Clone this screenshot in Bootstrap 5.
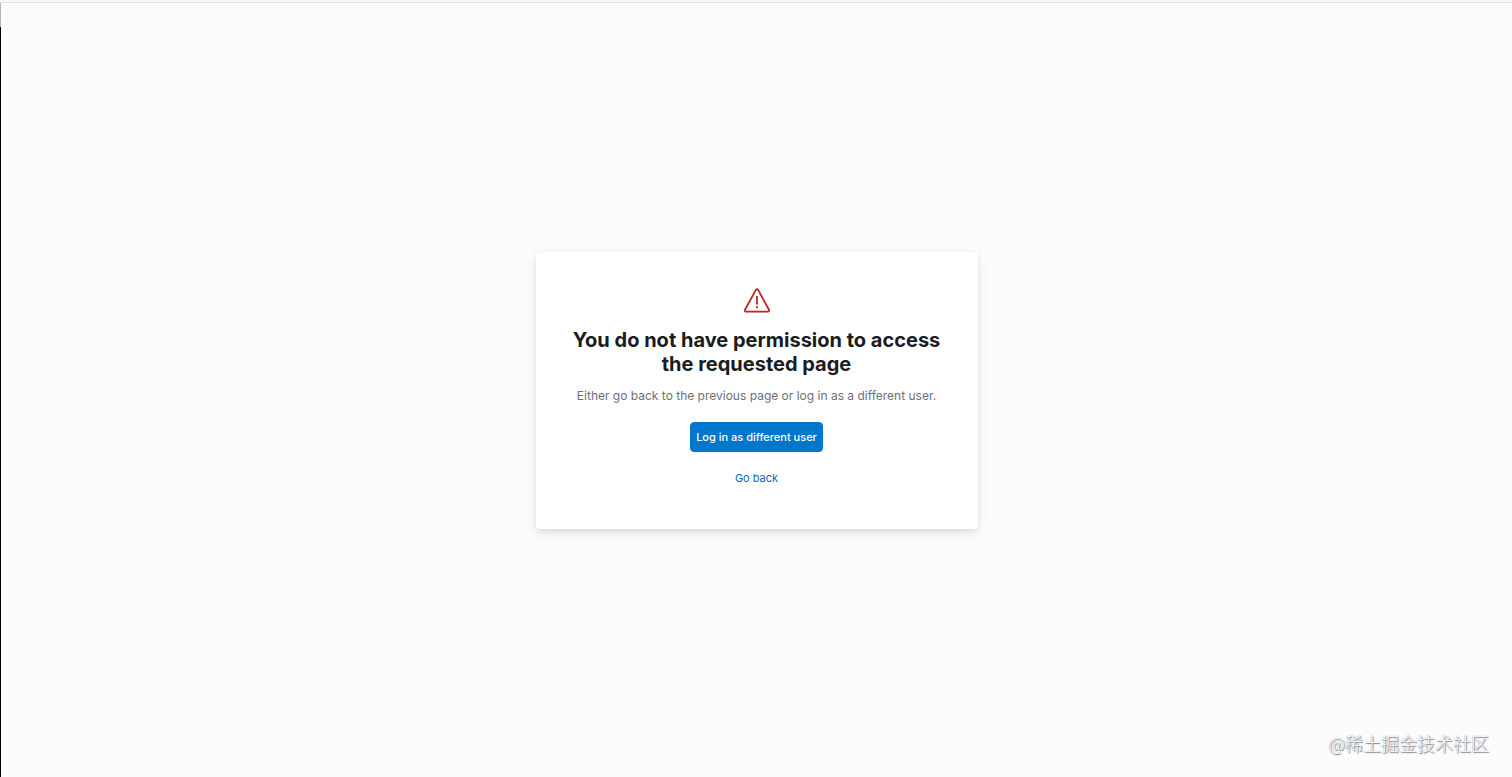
<!DOCTYPE html>
<html lang="en">
<head>
<meta charset="utf-8">
<meta name="viewport" content="width=device-width, initial-scale=1">
<title>Permission required</title>
<link href="https://cdn.jsdelivr.net/npm/bootstrap@5.3.0/dist/css/bootstrap.min.css" rel="stylesheet">
<style>
body { font-family: Inter, "Noto Sans CJK SC", sans-serif; background: #fafcfe; color: #1a1c21; }
.top-edge { height: 3px; background: #fafbfd; border-top: 1px solid #f8f6f7; border-bottom: 1px solid #e2e2e4; }
.side-edge { width: 1px; background: linear-gradient(#b5b3b5 24px, #000 24px); }
.prompt { width: 442px; padding: 36px 32px; border-radius: 4px; box-shadow: 0 0 12px rgba(0,0,0,.03), 0 6px 12px rgba(0,0,0,.07), 0 2px 4px rgba(0,0,0,.05); }
.prompt h1 { font-size: 20px; line-height: 24px; font-weight: 700; margin: 14px 0 11px; }
.prompt p { font-size: 12px; line-height: 18px; color: #6b707b; margin-bottom: 17px; }
.btn-login, .btn-back { font-size: 11px; line-height: 18px; padding: 5px; border-radius: 4px; font-weight: 500; }
.btn-login { --bs-btn-color: #fff; --bs-btn-bg: #0077cc; --bs-btn-border-color: #0077cc; --bs-btn-hover-color: #fff; --bs-btn-hover-bg: #0068b3; --bs-btn-hover-border-color: #0068b3; }
.btn-back { color: #0b68b4; margin-top: 11px; font-weight: 400; }
.watermark { right: 23px; bottom: 21px; font-size: 18px; line-height: 26px; color: #fff; text-shadow: 1px 1px 1px #77797c, 0 0 1px #7c7e81; font-weight: 300; font-family: "Noto Sans CJK SC", sans-serif; }
</style>
</head>
<body class="min-vh-100 d-flex flex-column position-relative">
<div class="top-edge"></div>
<div class="d-flex flex-grow-1">
  <div class="side-edge"></div>
  <main class="flex-grow-1 d-flex align-items-center justify-content-center">
    <section class="prompt bg-white text-center d-flex flex-column align-items-center">
      <svg width="28" height="26" viewBox="0 0 28 26" fill="none" stroke="#bd271e" stroke-width="1.8" stroke-linejoin="round" stroke-linecap="round" aria-hidden="true">
        <path d="M12.9 1.9a1.25 1.25 0 0 1 2.2 0l10.9 19.9a1.2 1.2 0 0 1-1 1.8H3a1.2 1.2 0 0 1-1-1.8z"/>
        <path d="M14 8v8.4" stroke-linecap="butt"/>
        <circle cx="14" cy="19.2" r="1.1" fill="#bd271e" stroke="none"/>
      </svg>
      <h1>You do not have permission to access the requested page</h1>
      <p>Either go back to the previous page or log in as a different user.</p>
      <button type="button" class="btn btn-login">Log in as different user</button>
      <button type="button" class="btn btn-back">Go back</button>
    </section>
  </main>
</div>
<div class="watermark position-absolute" lang="zh-CN">@稀土掘金技术社区</div>
<script src="https://cdn.jsdelivr.net/npm/bootstrap@5.3.0/dist/js/bootstrap.bundle.min.js"></script>
</body>
</html>
